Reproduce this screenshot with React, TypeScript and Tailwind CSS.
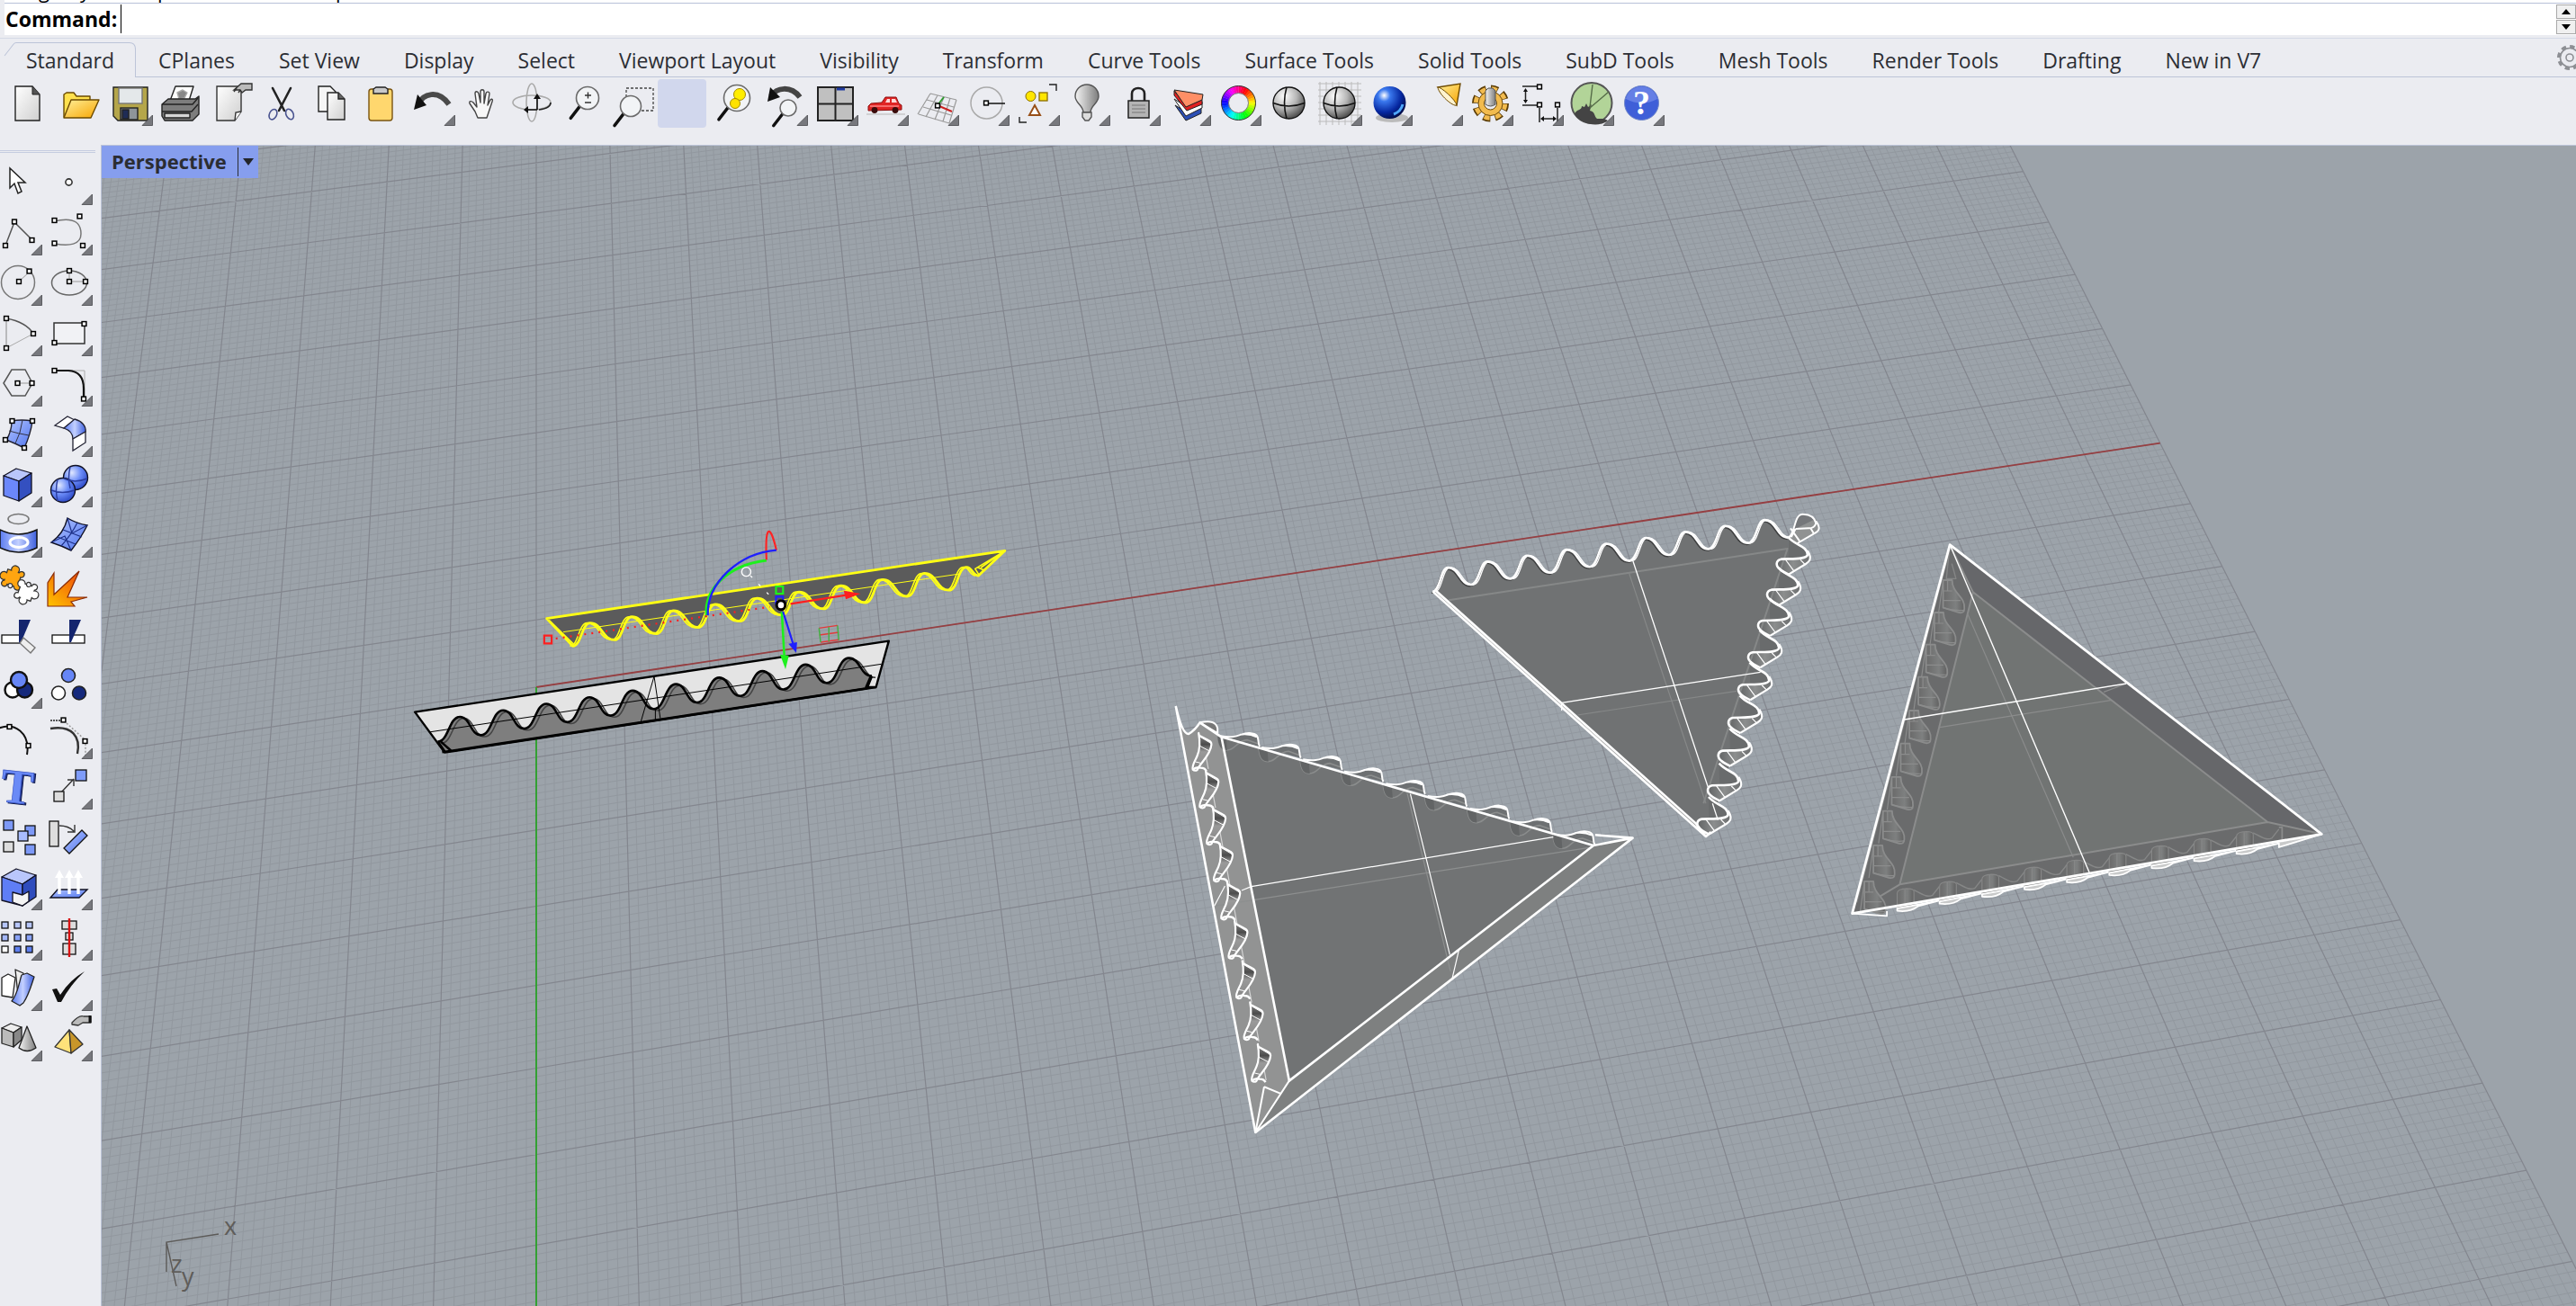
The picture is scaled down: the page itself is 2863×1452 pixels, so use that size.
import React from 'react';

type Point = [number, number];

interface Tool {
  label: string;
  icon?: React.ReactNode;
  menu?: boolean;
}

const TABS = [
  'Standard', 'CPlanes', 'Set View', 'Display', 'Select', 'Viewport Layout', 'Visibility', 'Transform',
  'Curve Tools', 'Surface Tools', 'Solid Tools', 'SubD Tools', 'Mesh Tools', 'Render Tools', 'Drafting', 'New in V7',
];

/* ---------- small drawing helpers ---------- */

const Knob = ({ x, y }: { x: number; y: number }) => (
  <rect x={x - 2.4} y={y - 2.4} width="4.8" height="4.8" fill="#fff" stroke="#000" strokeWidth="1.5" />
);

const Box = ({ x, y, w, h, fill }: { x: number; y: number; w: number; h: number; fill: string }) => (
  <rect x={x} y={y} width={w} height={h} fill={fill} stroke="#111" strokeWidth="1.3" />
);

const PuzzleShape = () => (
  <g>
    <rect x="-7.500" y="-7.500" width="15" height="15" />
    <circle cx="0" cy="-10" r="3.800" />
    <circle cx="-10" cy="0" r="3.800" />
    <circle cx="8" cy="-7" r="2.600" />
    <circle cx="-7" cy="8" r="2.600" />
    <circle cx="8" cy="7" r="3.400" />
  </g>
);

const Puzzle = ({ x, y, turn, fill }: { x: number; y: number; turn: number; fill: string }) => (
  <g transform={`translate(${x} ${y}) rotate(${turn})`}>
    <g fill="#333" stroke="#333" strokeWidth="2.600"><PuzzleShape /></g>
    <g fill={fill}><PuzzleShape /></g>
    <circle cx="0" cy="8.500" r="2.500" fill="#ebecf1" stroke="#333" strokeWidth="1.200" />
  </g>
);

const Defs = () => (
  <svg className="absolute h-0 w-0" aria-hidden="true">
    <defs>
      <linearGradient id="paper" x1="0" y1="0" x2="1" y2="1">
        <stop offset="0" stopColor="#fff" />
        <stop offset="1" stopColor="#cfcfcf" />
      </linearGradient>
      <linearGradient id="blue" x1="0" y1="0" x2="1" y2="1">
        <stop offset="0" stopColor="#b4c6ff" />
        <stop offset="1" stopColor="#4f74ee" />
      </linearGradient>
      <linearGradient id="blueBand" x1="0" y1="0" x2="1" y2="0">
        <stop offset="0" stopColor="#5b7cf0" />
        <stop offset="0.5" stopColor="#c3d0ff" />
        <stop offset="1" stopColor="#3d5fdd" />
      </linearGradient>
      <linearGradient id="gold" x1="0" y1="0" x2="1" y2="1">
        <stop offset="0" stopColor="#fff09a" />
        <stop offset="1" stopColor="#f7a400" />
      </linearGradient>
      <linearGradient id="fire" x1="0" y1="1" x2="1" y2="0">
        <stop offset="0" stopColor="#ffc400" />
        <stop offset="1" stopColor="#ee3d0c" />
      </linearGradient>
      <linearGradient id="steel" x1="0" y1="0" x2="1" y2="0">
        <stop offset="0" stopColor="#f4f4f4" />
        <stop offset="1" stopColor="#7d7d7d" />
      </linearGradient>
      <radialGradient id="ballBlue" cx="0.35" cy="0.3" r="0.75">
        <stop offset="0" stopColor="#dfe7ff" />
        <stop offset="0.5" stopColor="#6a8bf8" />
        <stop offset="1" stopColor="#2b47c4" />
      </radialGradient>
      <radialGradient id="ballDeep" cx="0.33" cy="0.28" r="0.75">
        <stop offset="0" stopColor="#fff" />
        <stop offset="0.25" stopColor="#3a78ee" />
        <stop offset="0.7" stopColor="#0527a0" />
        <stop offset="1" stopColor="#020f4c" />
      </radialGradient>
      <radialGradient id="ballGray" cx="0.35" cy="0.28" r="0.8">
        <stop offset="0" stopColor="#fff" />
        <stop offset="0.5" stopColor="#b6b6b6" />
        <stop offset="1" stopColor="#3c3c3c" />
      </radialGradient>
      <linearGradient id="hook" x1="0" y1="0" x2="0" y2="1">
        <stop offset="0" stopColor="#8c8c8c" />
        <stop offset="0.3" stopColor="#4c4c4c" />
        <stop offset="0.5" stopColor="#9a9a9a" />
        <stop offset="1" stopColor="#858585" />
      </linearGradient>
      <linearGradient id="cyl" x1="0" y1="0" x2="1" y2="0">
        <stop offset="0" stopColor="#6a6a6a" />
        <stop offset="0.6" stopColor="#7e8080" />
        <stop offset="1" stopColor="#606060" />
      </linearGradient>
      <linearGradient id="ribbon" x1="0" y1="0" x2="1" y2="0">
        <stop offset="0" stopColor="#606263" />
        <stop offset="0.5" stopColor="#8c8e8e" />
        <stop offset="1" stopColor="#6c6e6f" />
      </linearGradient>
    </defs>
  </svg>
);

const ColorRing = () => (
  <g fill="none" strokeWidth="8">
    {Array.from({ length: 36 }, (_, k) => {
      const a = ((k * 10 - 90) * Math.PI) / 180;
      const b = ((k * 10 - 79) * Math.PI) / 180;
      return (
        <path
          key={k}
          stroke={`hsl(${(335 + k * 10) % 360} 100% 50%)`}
          d={`M${29.5 + 15 * Math.cos(a)} ${26.5 + 15 * Math.sin(a)}A15 15 0 0 1 ${29.5 + 15 * Math.cos(b)} ${26.5 + 15 * Math.sin(b)}`}
        />
      );
    })}
    <circle cx="29.5" cy="26.5" r="19" stroke="#333" strokeWidth="1" />
    <circle cx="29.5" cy="26.5" r="11" stroke="#777" strokeWidth="1" />
  </g>
);

const GrayBall = () => (
  <g>
    <circle cx="29.5" cy="26.5" r="17.5" fill="url(#ballGray)" stroke="#111" strokeWidth="1.4" />
    <path d="M12 26.5q17 7 35 0M27 9q-5 17 0 35" fill="none" stroke="#111" strokeWidth="1.6" />
  </g>
);

const Lens = ({ x, y, r }: { x: number; y: number; r: number }) => (
  <g>
    <path d={`M${x - r * 0.7} ${y + r * 0.75}L${x - r * 0.7 - 10} ${y + r * 0.75 + 13}`} stroke="#111" strokeWidth="3.4" strokeLinecap="round" />
    <circle cx={x} cy={y} r={r} fill="#f2f4f6" stroke="#6b6b6b" strokeWidth="1.6" />
  </g>
);

/* ---------- top toolbar ---------- */

const TOOLBAR: Tool[] = [
  { label: 'New', icon: <g><path d="M14 8h19l8 9v29H14z" fill="url(#paper)" stroke="#222" strokeWidth="1.4" /><path d="M33 8v9h8" fill="#555" stroke="#222" /></g> },
  { label: 'Open', icon: <g stroke="#6b4a00" strokeWidth="1.4" strokeLinejoin="round"><path d="M12 42V17l3-2h8l3 4h15v20z" fill="#ffe14d" /><path d="M12 43l8-20h31l-9 20z" fill="url(#gold)" /></g> },
  { label: 'Save', menu: true, icon: <g stroke="#222" strokeWidth="1.4"><path d="M11 9h38v37H16l-5-5z" fill="#b5a64a" /><rect x="17" y="10" width="26" height="17" fill="#e4e8ea" stroke="#777" /><rect x="19" y="32" width="19" height="13" fill="#8e9499" /><rect x="21" y="34" width="7" height="10" fill="#1f2c55" /></g> },
  { label: 'Print', icon: <g stroke="#222" strokeWidth="1.4" strokeLinejoin="round"><path d="M18 24l6-16h20l-5 16z" fill="#fff" /><path d="M26 15l6-3 5 3-3 6-6 1z" fill="#888" stroke="#aaa" /><path d="M9 28l7-6h30l4-3v20l-7 7H12l-3-5z" fill="#7d7d7d" /><path d="M9 28h34l6-7M9 36h33l7-8" fill="none" /><path d="M12 38h28v5H12z" fill="#d5d5d5" /></g> },
  { label: 'Properties', icon: <g stroke="#333" strokeWidth="1.4"><path d="M14 8h27v28l-7 10H14z" fill="url(#paper)" /><path d="M34 46l1-9 6-1" fill="#fff" /><path d="M33 12l8-7h12v7h-7l-4 3-2-3z" fill="#bbb" /><path d="M36 10l-3 4M40 12l-2 3" /></g> },
  { label: 'Cut', icon: <g fill="none" strokeLinecap="round"><path d="M20 10l13 25M40 10L27 35" stroke="#222" strokeWidth="2.6" /><ellipse cx="20.500" cy="39" rx="4" ry="6" transform="rotate(25 20 39)" stroke="#4a5490" strokeWidth="1.6" /><ellipse cx="39" cy="39" rx="4" ry="6" transform="rotate(-25 39 39)" stroke="#4a5490" strokeWidth="1.6" /></g> },
  { label: 'Copy', icon: <g stroke="#222" strokeWidth="1.4"><path d="M15 8h13l6 6v22H15z" fill="#f6f6f6" /><path d="M25 15h12l7 7v23H25z" fill="url(#paper)" /><path d="M37 15v7h7" fill="#666" /></g> },
  { label: 'Paste', icon: <g stroke="#7a5410" strokeWidth="1.4"><rect x="15" y="11" width="26" height="35" rx="3" fill="#ffd76e" /><path d="M20 16v-5l3-2h10l3 2v5z" fill="#c9c9c9" stroke="#222" /></g> },
  { label: 'Undo', menu: true, icon: <g><path d="M14 28C19 16 36 11 48 28" fill="none" stroke="#4a4a4a" strokeWidth="6" /><path d="M9 34l4-17 10 12z" fill="#111" /></g> },
  { label: 'Pan', icon: <path d="M24 43l-3-7-6-9c-1-3 2-3 4-1l4 5-2-15c0-3 3-3 4 0l2 10V14c0-3 4-3 4 0v13l2-11c1-3 4-2 4 0l-2 13 3-6c2-2 3 0 2 2l-4 12-2 6z" fill="#f7f7f7" stroke="#444" strokeWidth="1.4" strokeLinejoin="round" /> },
  { label: 'Rotate view', icon: <g fill="none" stroke="#aaa" strokeWidth="1.6"><ellipse cx="28" cy="26" rx="6" ry="21" /><ellipse cx="28" cy="26" rx="21" ry="8" /><path d="M36 34c8-1 13-4 13-8" stroke="#222" /><path d="M34 19v15M22 34h12" stroke="#111" /><path d="M30 22l4-6 4 6zM24 30l-5 4 5 4z" fill="#111" stroke="none" /></g> },
  { label: 'Zoom dynamic', icon: <g><Lens x={34} y={21} r={12.5} /><path d="M31 18h7M34.500 14.500v7M31 26h7" stroke="#333" strokeWidth="1.4" /></g> },
  { label: 'Zoom window', icon: <g><rect x="21" y="10" width="30" height="25" fill="none" stroke="#444" strokeWidth="1.3" strokeDasharray="3 2" /><Lens x={26} y={30} r={11.500} /></g> },
  { label: 'Zoom extents' },
  { label: 'Zoom selected', icon: <g><Lens x={32} y={21} r={14.500} /><circle cx="35" cy="17" r="6.500" fill="#ffee00" stroke="#a58a00" /><circle cx="30" cy="27" r="5.500" fill="#ffe200" stroke="#a58a00" /></g> },
  { label: 'Undo view change', menu: true, icon: <g><path d="M14 19C20 9 36 7 46 20" fill="none" stroke="#444" strokeWidth="6" /><path d="M10 25l3-16 11 11z" fill="#111" /><Lens x={33} y={32} r={9} /></g> },
  { label: 'Four viewports', menu: true, icon: <g stroke="#222" strokeWidth="2"><rect x="10" y="9" width="39" height="37" fill="#c0c0c0" /><path d="M29.500 9v37M10 27.500h39" /><path d="M31 11h9" stroke="#1d38a0" strokeWidth="3" /></g> },
  { label: 'Named views', menu: true, icon: <g><path d="M8 39h43" stroke="#c9c9c9" strokeWidth="1.600" /><path d="M10 35v-5l3-3 12-1 4-6h12l3 7 3 2v5z" fill="#e02424" stroke="#8e1212" strokeWidth="1" /><path d="M12 30h32" stroke="#ff8b8b" strokeWidth="1.400" /><path d="M29 26l2-4h3v4zM36 26v-4h4l2 4z" fill="#ffd9d9" /><circle cx="17" cy="34.500" r="3.400" fill="#3a0a0a" /><circle cx="40" cy="34.500" r="3.400" fill="#3a0a0a" /></g> },
  { label: 'Set CPlane', menu: true, icon: <g fill="none" stroke="#9a9a9a" strokeWidth="1.200"><path d="M23 16l29 7M19 23l30 8M15 31l31 9M10 39l34 10M23 16L9 39M31 18L18 42M38 20L28 45M45 21L37 47M52 23L44 49" /><path d="M31 29l7-9" stroke="#2e9b2e" strokeWidth="2" /><path d="M33 30l14 6" stroke="#c22" strokeWidth="2" /><Knob x={31} y={29.500} /></g> },
  { label: 'Object snap', menu: true, icon: <g fill="none"><circle cx="29.500" cy="26.500" r="17.500" stroke="#aaa" strokeWidth="1.500" /><path d="M30 27h20" stroke="#111" strokeWidth="1.500" /><Knob x={29} y={26.500} /></g> },
  { label: 'Select', menu: true, icon: <g><circle cx="22.500" cy="19" r="5.500" fill="#ffe600" stroke="#8a6d00" /><rect x="32" y="15" width="9" height="9" fill="#ffe600" stroke="#8a6d00" strokeWidth="1.300" /><path d="M27 29l6 11H21z" fill="#fff" stroke="#984f17" strokeWidth="2" /><path d="M43 6h8v7M10 42v6h8" fill="none" stroke="#222" strokeWidth="1.400" /></g> },
  { label: 'Hide objects', menu: true, icon: <g stroke="#555" strokeWidth="1.400"><path d="M25 37c0-8-9-10-9-18a13 13 0 0126 0c0 8-9 10-9 18z" fill="url(#steel)" /><path d="M24 37h10v5l-3 4h-4l-3-4z" fill="#ddd" /></g> },
  { label: 'Lock objects', menu: true, icon: <g stroke="#222"><path d="M23 25v-9c0-8 14-8 14 0v9" fill="none" strokeWidth="2.600" /><rect x="19" y="24" width="23" height="19" fill="#b4b4b4" strokeWidth="1.500" /><path d="M23 29h15M23 33h15M23 37h15" stroke="#777" /></g> },
  { label: 'Layers', menu: true, icon: <g stroke="#222" strokeWidth="1" strokeLinejoin="round"><path d="M15 29l12 17 17-8V31L28 37z" fill="#2c4fb6" /><path d="M14 22l13 19 18-9v-7L28 31z" fill="#fff" /><path d="M14 13l14 17 17-7v5L28 35 14 18z" fill="#e22020" /><path d="M14 12l32 5-1 6-18 8z" fill="#ff8f66" /></g> },
  { label: 'Object properties', menu: true, icon: <ColorRing /> },
  { label: 'Shade', icon: <GrayBall /> },
  { label: 'Render preview', menu: true, icon: <g><path d="M8 3v48M15 3v48M22 3v48M29 3v48M36 3v48M43 3v48M50 3v48M6 5h48M6 12h48M6 19h48M6 26h48M6 33h48M6 40h48M6 47h48" stroke="#bbb" /><GrayBall /></g> },
  { label: 'Render', menu: true, icon: <g><ellipse cx="32" cy="43" rx="18" ry="5" fill="#bbb" /><circle cx="29.500" cy="26" r="18" fill="url(#ballDeep)" /><path d="M34 39q8-3 10-11" fill="none" stroke="#4fa8ff" strokeWidth="3" /></g> },
  { label: 'Spotlight', menu: true, icon: <g><path d="M27 9l25-4-4 24z" fill="url(#gold)" stroke="#6e4a00" strokeWidth="1.400" /><path d="M27 9c3-1 20 14 21 20-4 2-20-12-21-20z" fill="#fff3cf" stroke="#6e4a00" /></g> },
  { label: 'Options', menu: true, icon: <g><circle cx="29.500" cy="27" r="15.500" fill="none" stroke="#5a3c06" strokeWidth="10" strokeDasharray="7.200 4.970" /><circle cx="29.500" cy="27" r="15" fill="none" stroke="#f2bb4e" strokeWidth="7.500" strokeDasharray="5.600 6.180" strokeDashoffset="-0.700" /><circle cx="29.500" cy="27" r="13.500" fill="#f2bb4e" stroke="#6a4708" /><circle cx="29.500" cy="27" r="7" fill="#ebecf1" stroke="#6a4708" /><path d="M24 28V13l3-3h5l3 3v15q-5 4-11 0z" fill="url(#steel)" stroke="#555" /></g> },
  { label: 'Dimensions', menu: true, icon: <g fill="none" stroke="#222" strokeWidth="1.500"><path d="M9 8h18M9 29h18M12.500 12v13M28 32v16M48 32v16M31 44h14" /><path d="M10 14l2.500-4 2.500 4zM10 23l2.500 4 2.500-4zM33 41l-4 3 4 3zM43 41l4 3-4 3z" fill="#111" stroke="none" /><Knob x={28} y={8.500} /><Knob x={28} y={28.500} /><Knob x={48} y={28.500} /></g> },
  { label: 'Grasshopper', menu: true, icon: <g><circle cx="30" cy="26.500" r="22.500" fill="#b2d498" stroke="#555" strokeWidth="2" /><path d="M11 39c2-6 8-4 8-9l3 1 2-4 2 4 4-3-2 7c7 2 4 6 8 9h8l4 2c-9 8-30 5-37-7z" fill="#444" /><path d="M28 32L49 14M28 31L31 6" stroke="#556b48" strokeWidth="1.400" /></g> },
  { label: 'Help', menu: true, icon: <g><circle cx="29.500" cy="26.500" r="19" fill="#3f5fd8" stroke="#6f86c8" /><path d="M12 22a18 18 0 0135 0q-17 9-35 0z" fill="#7e95ee" opacity="0.600" /><text x="29.500" y="39" textAnchor="middle" fontSize="38" fontWeight="bold" fontFamily="'Liberation Serif', serif" fill="#fff">?</text></g> },
];

/* ---------- side toolbar, two tools in each row ---------- */

const SIDEBAR: Tool[] = [
  { label: 'Cancel', icon: <path d="M19 11v22l5-5 4 11 4-2-4-10h8z" fill="#fff" stroke="#222" strokeWidth="1.500" /> },
  { label: 'Point', menu: true, icon: <circle cx="28.500" cy="26.500" r="3.600" fill="#fff" stroke="#333" strokeWidth="1.600" /> },
  { label: 'Polyline', menu: true, icon: <g><path d="M14 41l10-26 20 20" fill="none" stroke="#555" strokeWidth="1.500" /><Knob x={14} y={41} /><Knob x={24} y={14.500} /><Knob x={43.500} y={35} /></g> },
  { label: 'Curve', menu: true, icon: <g><path d="M12 14c25-6 30 4 30 14 0 12-13 14-29 11" fill="none" stroke="#777" strokeWidth="1.500" /><Knob x={12.500} y={13} /><Knob x={40.500} y={8.500} /><Knob x={12.500} y={38.500} /><Knob x={44} y={41} /></g> },
  { label: 'Circle', menu: true, icon: <g><circle cx="28" cy="26" r="18.500" fill="none" stroke="#777" strokeWidth="1.500" /><path d="M29 25l12-11" stroke="#999" /><Knob x={29} y={25} /><Knob x={40.500} y={13.500} /></g> },
  { label: 'Ellipse', menu: true, icon: <g><ellipse cx="29" cy="26.500" rx="19.500" ry="13.500" fill="none" stroke="#666" strokeWidth="1.500" /><path d="M29 13v12h18" fill="none" stroke="#999" /><Knob x={29} y={13} /><Knob x={29} y={25} /><Knob x={47} y={25} /></g> },
  { label: 'Arc', menu: true, icon: <g fill="none"><path d="M15 43V10" stroke="#888" /><path d="M15 10q22 4 30 17" stroke="#555" strokeWidth="1.500" /><path d="M45 27L15 43" stroke="#aaa" /><Knob x={15} y={10} /><Knob x={45} y={27} /><Knob x={15} y={43} /></g> },
  { label: 'Rectangle', menu: true, icon: <g><path d="M12 38V15h34v23z" fill="#f1f2f5" stroke="#333" strokeWidth="1.500" /><Knob x={45.500} y={16} /><Knob x={12.500} y={37} /></g> },
  { label: 'Polygon', menu: true, icon: <g><path d="M12 26l9-15h15l8 15-8 14H21z" fill="none" stroke="#555" strokeWidth="1.500" /><path d="M28 26h16" stroke="#999" /><Knob x={27.500} y={26} /><Knob x={43.500} y={26} /></g> },
  { label: 'Fillet', menu: true, icon: <g fill="none"><path d="M12 12h34v32" stroke="#aaa" /><path d="M12 12h16q17 1 17 20v12" stroke="#111" strokeWidth="2.200" /><Knob x={12.500} y={12} /><Knob x={45} y={43.500} /></g> },
  { label: 'Surface', menu: true, icon: <g><path d="M21 12q11-2 23 0-2 15-9 30-10-5-20-9 6-9 6-21z" fill="url(#blue)" stroke="#223" strokeWidth="1.400" /><path d="M33 11q-2 15-8 26M18 23q10 3 22 5" stroke="#334" fill="none" /><Knob x={21.500} y={12} /><Knob x={44} y={12} /><Knob x={14} y={33} /><Knob x={35} y={42} /></g> },
  { label: 'Blend surface', menu: true, icon: <g stroke="#223" strokeWidth="1.300"><path d="M13 17l14-10 8 4-12 9z" fill="#fff" /><path d="M23 20l12-10c8 2 13 8 12 14l-14 8c0-6-4-10-10-12z" fill="url(#blueBand)" /><path d="M33 32l14-8v12L33 45z" fill="#fff" /></g> },
  { label: 'Box', menu: true, icon: <g stroke="#112" strokeWidth="1.300" strokeLinejoin="round"><path d="M12 17l14-8 17 5-14 9z" fill="#b9c6fb" /><path d="M12 17l17 6v22l-17-6z" fill="#6b87fb" /><path d="M29 23l14-9v22l-14 9z" fill="#3450c0" /></g> },
  { label: 'Boolean union', menu: true, icon: <g stroke="#112" strokeWidth="1.400" fill="none"><circle cx="36" cy="19" r="13.500" fill="url(#ballBlue)" /><circle cx="22" cy="33" r="13.500" fill="url(#ballBlue)" /><path d="M30 7q-3 12 0 24M23 20q12 6 26 0M16 21q-3 12 0 24M9 33q12 5 26 0" stroke="#2a3da0" /></g> },
  { label: 'Project', menu: true, icon: <g><ellipse cx="28.500" cy="9" rx="11.500" ry="5.500" fill="none" stroke="#777" strokeWidth="1.600" /><path d="M8 21q20 10 41 0v20q-20 10-41 0z" fill="url(#blueBand)" stroke="#111" strokeWidth="1.500" /><ellipse cx="29" cy="35" rx="10" ry="5.500" fill="none" stroke="#fff" strokeWidth="3" /></g> },
  { label: 'Mesh', menu: true, icon: <g><path d="M27 8q10 6 22 8-7 14-18 28-10-5-22-9 14-10 18-27z" fill="url(#blue)" stroke="#112" strokeWidth="1.400" /><path d="M38 13q-7 14-18 26M22 21l21 8M16 29l20 8M27 8l5 17 17-9M9 35l15-7 7 16" fill="none" stroke="#1c2f88" strokeWidth="1.200" /></g> },
  { label: 'Join', icon: <g><Puzzle x={22} y={19} turn={18} fill="#ffa511" /><Puzzle x={37} y={34} turn={200} fill="#fff" /></g> },
  { label: 'Explode', icon: <path d="M5 50V24l7-11v24l28-26-13 29 22 0-18 5 4 5z" fill="url(#fire)" stroke="#8a2b06" strokeWidth="1.200" /> },
  { label: 'Trim', icon: <g><Box x={10} y={26} w={20} h={9} fill="#fff" /><path d="M29 9h13L31 35h-2z" fill="#14256e" /><path d="M34 29l13 11-5 6-12-11z" fill="#eee" stroke="#777" strokeWidth="1.400" /></g> },
  { label: 'Split', icon: <g><Box x={10} y={26} w={36} h={9} fill="#fff" /><path d="M29 9h13L31 34h-2z" fill="#14256e" /></g> },
  { label: 'Group', menu: true, icon: <g stroke="#111" strokeWidth="2.400"><circle cx="22" cy="31" r="8.500" fill="#fff" /><circle cx="35.500" cy="31" r="8.500" fill="#15297c" /><circle cx="29" cy="20" r="9" fill="#6686f6" /></g> },
  { label: 'Ungroup', icon: <g stroke="#222" strokeWidth="1.600"><circle cx="28" cy="15" r="7.500" fill="#6686f6" /><circle cx="17" cy="34.500" r="7.500" fill="#fff" /><circle cx="40" cy="34.500" r="7.500" fill="#15297c" /></g> },
  { label: 'Edit points', icon: <g fill="none"><path d="M6 18c18-8 36 5 32 29" stroke="#111" strokeWidth="2" /><Knob x={18.500} y={16} /><Knob x={39.500} y={37} /></g> },
  { label: 'Control points', menu: true, icon: <g fill="none"><path d="M8 18c24-4 34 9 30 28" stroke="#333" strokeWidth="2.400" /><path d="M8 9h12" stroke="#222" strokeDasharray="2 1" strokeWidth="1.500" /><path d="M26 12l21 19v17" stroke="#999" strokeDasharray="2 2" strokeWidth="1.500" /><Knob x={22.500} y={8.500} /><Knob x={46.500} y={32} /></g> },
  { label: 'Text', icon: <g transform="rotate(6 28 27)" textAnchor="middle" fontSize="54" fontWeight="bold" fontFamily="'Liberation Serif', serif"><text x="29" y="46" fill="#24358c" stroke="#111b4a" aria-hidden="true">T</text><text x="27" y="45" fill="#6a8af6" stroke="#3450c0" strokeWidth="0.600">T</text></g> },
  { label: 'Move', menu: true, icon: <g><path d="M20 33l14-15M27 19h7v7" fill="none" stroke="#333" strokeWidth="1.400" /><Box x={12} y={32} w={11} h={11} fill="#ddd" /><Box x={36} y={8} w={12} h={12} fill="#7f9cfa" /></g> },
  { label: 'Array', icon: <g><Box x={12} y={8} w={11} h={11} fill="#7d99f7" /><Box x={36} y={14} w={11} h={11} fill="#7d99f7" /><Box x={28} y={20} w={11} h={11} fill="#a9bcff" /><Box x={12} y={32} w={11} h={11} fill="#ddd" /><Box x={36} y={35} w={11} h={11} fill="#7d99f7" /></g> },
  { label: 'Rotate', icon: <g><Box x={7} y={9} w={10} h={28} fill="#ddd" /><path d="M18 14q10 0 16 6M35 13v8h-8" fill="none" stroke="#333" strokeWidth="1.400" /><path d="M23 39l20-20 6 6-20 20z" fill="url(#blue)" stroke="#111" strokeWidth="1.300" /></g> },
  { label: 'Solid edit', menu: true, icon: <g stroke="#112" strokeWidth="1.300" strokeLinejoin="round"><path d="M10 15L26 6l22 7-15 10z" fill="#b9c6fb" /><path d="M10 15l23 8v24l-23-6z" fill="#5f7ef5" /><path d="M33 23l15-10v24L33 47z" fill="#2f4cbd" /><path d="M22 32l11 3 7-4v11l-7 5-11-4z" fill="#f4f4f4" /></g> },
  { label: 'Extrude', menu: true, icon: <g><path d="M16 29h33l-9 9H8z" fill="url(#blue)" stroke="#112" strokeWidth="1.400" /><path d="M18 34V14M29 34V14M39 34V14" stroke="#fff" strokeWidth="3.400" /><path d="M13 16l5-9 5 9zM24 16l5-9 5 9zM34 16l5-9 5 9z" fill="#fff" /></g> },
  { label: 'Rectangular array', menu: true, icon: <g><Box x={10} y={9} w={7} h={7} fill="#b7c6fb" /><Box x={24} y={9} w={7} h={7} fill="#b7c6fb" /><Box x={37} y={9} w={7} h={7} fill="#b7c6fb" /><Box x={10} y={23} w={7} h={7} fill="#a3b7fa" /><Box x={24} y={23} w={7} h={7} fill="#8aa3f8" /><Box x={37} y={23} w={7} h={7} fill="#8aa3f8" /><Box x={10} y={36} w={7} h={7} fill="#fff" /><Box x={24} y={36} w={7} h={7} fill="#5f80f0" /><Box x={37} y={36} w={7} h={7} fill="#5f80f0" /></g> },
  { label: 'Align', menu: true, icon: <g><Box x={21} y={8} w={16} h={9} fill="#ddd" /><Box x={25} y={21} w={8} h={8} fill="#ddd" /><Box x={22} y={33} w={14} h={12} fill="#ddd" /><path d="M29 5v43" stroke="#d81313" strokeWidth="2.400" /></g> },
  { label: 'Flow', menu: true, icon: <g stroke="#222" strokeWidth="1.300" strokeLinejoin="round"><path d="M25 6l9 4-6 24z" fill="#eee" /><path d="M10 15l7-4 8 4-3 22-12-2z" fill="#fff" /><path d="M32 12l6-2 8 4c-4 12-6 20-12 29l-4 3-9-5c7-8 8-20 11-29z" fill="url(#blueBand)" /></g> },
  { label: 'Check', menu: true, icon: <path d="M10 28l5-1 4 7Q30 17 46 8 30 23 20 42h-4z" fill="#111" /> },
  { label: 'Solids', menu: true, icon: <g stroke="#222" strokeWidth="1.300" strokeLinejoin="round"><path d="M10 15l10-5 12 4-9 6z" fill="#eee" /><path d="M10 15l13 5v16l-13-4z" fill="#bbb" /><path d="M23 20l9-6v14l-9 8z" fill="#888" /><path d="M38 13l10 24q-10 7-19 0z" fill="url(#steel)" /></g> },
  { label: 'Pyramid', menu: true, icon: <g stroke="#333" strokeWidth="1.300" strokeLinejoin="round"><path d="M29 17L13 36l18 7z" fill="#ffe27a" /><path d="M29 17l2 26 13-10z" fill="#c8962a" /><path d="M32 9q8-9 13-7h8v7h-9l-5 3-7-1z" fill="#bbb" /><path d="M52 1v8" stroke="#111" strokeWidth="3" /></g> },
];

const ToolButton: React.FC<{ tool: Tool }> = ({ tool }) => (
  <button
    type="button"
    aria-label={tool.label}
    className={tool.icon ? 'size-[54px] shrink-0' : 'size-[54px] shrink-0 rounded-sm bg-[#d1d7ed]'}
  >
    <svg viewBox="0 0 54 54" className="size-full overflow-visible">
      {tool.icon}
      {tool.menu && <path d="M54.500 40v11.500H43z" fill="#77787d" stroke="#46474b" strokeWidth="0.800" />}
    </svg>
  </button>
);

/* ---------- viewport: construction plane ---------- */

// perspective projection of a construction plane point, in major grid units
const project = (i: number, j: number): Point => {
  const a = 0.003786 * i;
  const b = -0.0198 * j;
  const w = 1 + a + b;
  return [(596 + a * 26235 + b * 596) / w, (764 - a * 3091 - b * 3091) / w];
};

const segment = (p: Point, q: Point) => `M${p[0].toFixed(1)} ${p[1].toFixed(1)}L${q[0].toFixed(1)} ${q[1].toFixed(1)}`;

const gridPath = (major: boolean) => {
  let d = '';
  for (let k = -200; k <= 200; k++) {
    if ((k % 10 === 0) !== major) continue;
    d += segment(project(k / 10, -20), project(k / 10, 20));
    d += segment(project(-20, k / 10), project(20, k / 10));
  }
  return d;
};

const MINOR = gridPath(false);
const MAJOR = gridPath(true);
const X_AXIS = segment(project(0, 0), project(20, 0));
const Y_AXIS = segment(project(0, 0), project(0, 20));

/* ---------- viewport: models ---------- */

// rounded wave through alternating low and high points
const wave = (points: Point[], ease = 0.5) =>
  points
    .slice(1)
    .map(([x, y], k) => {
      const [px, py] = points[k];
      const dx = (x - px) * ease;
      return `C${px + dx} ${py} ${x - dx} ${y} ${x} ${y}`;
    })
    .join('');

const alternate = (low: Point, high: Point, step: Point, count: number): Point[] => {
  const out: Point[] = [];
  for (let k = 0; k < count; k++) {
    out.push([low[0] + step[0] * k, low[1] + step[1] * k], [high[0] + step[0] * k, high[1] + step[1] * k]);
  }
  return out;
};

const darkWave = wave([...alternate([101, 794], [155, 711], [104.6, -21.8], 10), [1152, 575]]);
const yellowWave = wave([...alternate([428, 475], [470, 398], [101.2, -20.7], 10), [1410, 240]]);
const whiteWave = wave([[97, 323], [148, 243], ...alternate([225, 300], [280, 223], [132, -19.8], 8), [1283, 143]]);

const HOOKS: Point[] = [[148, 165], [170, 290], [192, 412], [214, 535], [237, 662], [260, 792], [284, 925], [308, 1063], [332, 1203]];
const BUMPS: Point[] = [[230, 180], [358, 218], [487, 258], [615, 298], [745, 339], [875, 380], [1007, 422], [1140, 465], [1273, 508]];
const RUNGS: Point[] = [[1357, 213], [1325, 315], [1295, 418], [1262, 524], [1229, 632], [1196, 742], [1162, 852], [1127, 968], [1092, 1080]];
const FOLDS: Point[] = [[335, 195], [308, 303], [282, 410], [258, 518], [230, 630], [203, 740], [175, 852], [148, 965], [118, 1080], [90, 1200]];

const Strips = () => (
  <g transform="translate(440 560) scale(0.4592 0.3333)" fill="none" strokeLinejoin="round">
    <path d="M46 695L1193 458L1162 612L118 830z" fill="#e4e4e4" />
    <path d={`M101 794${darkWave}L1135 617L118 830z`} fill="#7e7e7e" />
    <path d={`M101 794${darkWave}`} stroke="#444" strokeWidth="1.6" transform="translate(9 5)" />
    <g stroke="#000">
      <path d="M80 762L1175 535M625 576L593 727M625 576L640 716M628 683v38" strokeWidth="1" />
      <path d={`M101 794${darkWave}`} strokeWidth="2.6" />
      <path d="M46 695L1193 458L1162 612L118 830z" strokeWidth="2.4" />
      <path d="M112 829L1140 616L1152 575M1162 612h-24l12-38M102 794l18 36M109 794l26 32" strokeWidth="2.6" />
    </g>
    <path d={`M365 383L428 475${yellowWave}L1474 157z`} fill="#5b5b5b" />
    <g stroke="#ffff14">
      <path d="M405 428L1365 234" strokeWidth="1" />
      <path d={`M428 475${yellowWave}`} strokeWidth="1.6" transform="translate(-7 0)" />
      <path d={`M365 383L428 475${yellowWave}L1474 157z`} strokeWidth="2.8" />
      <path d="M372 390l58 78M1474 157l-72 60 10 22M1408 212l16 10M1474 157l-58 56" strokeWidth="1.6" />
    </g>
  </g>
);

const Gumball = () => (
  <g transform="translate(440 560) scale(0.4592 0.3333)" fill="none" strokeWidth="2.2">
    <path d="M752 373C745 290 800 205 897 189" stroke="#1df01d" strokeWidth="3" />
    <path d="M897 187C893 75 905 60 921 155" stroke="#ff2424" />
    <path d="M755 373C752 265 830 165 921 155" stroke="#1f1fff" strokeWidth="2.4" />
    <ellipse cx="848" cy="227" rx="11" ry="15" stroke="#fff" strokeWidth="1.4" />
    <path d="M858 240L925 335" stroke="#fff" strokeWidth="1.2" strokeDasharray="3 10" />
    <path d="M387 450L905 344" stroke="#ff1f1f" strokeDasharray="2 6" />
    <path d="M359 440h18v26h-18z" stroke="#ff1f1f" />
    <path d="M920 276h17v24h-17z" stroke="#1df01d" />
    <path d="M920 310h17v24h-17z" stroke="#1f1fff" />
    <path d="M955 334L1090 305" stroke="#ff1f1f" />
    <path d="M1125 300L1084 290L1089 319z" fill="#ff1f1f" />
    <path d="M934 360L940 506" stroke="#1df01d" strokeWidth="2.6" />
    <path d="M943 552L930 503L951 507z" fill="#1df01d" />
    <path d="M937 360L962 470" stroke="#1f1fff" />
    <path d="M969 497L950 467L971 462z" fill="#1f1fff" />
    <ellipse cx="932" cy="338" rx="10.500" ry="15" fill="#fff" stroke="#000" strokeWidth="3" />
    <path d="M1024 415l45-9M1025 438l47-9M1028 462l44-8" stroke="#e33a3a" strokeWidth="1.400" />
    <path d="M1024 415l4 47M1048 412v48M1069 406l3 49" stroke="#3fb43f" strokeWidth="1.400" />
  </g>
);

const LeftPanelModel = () => (
  <g transform="translate(1280 760) scale(0.3571 0.3333)" fill="none" strokeLinejoin="round">
    <path d="M217 178L1375 540L428 1325z" fill="#717374" />
    <path d="M77 78Q92 150 108 168Q130 165 150 130L217 178L428 1325L323 1497z" fill="#929393" />
    <path d="M323 1497L428 1325L1375 540L1497 515z" fill="#7e8080" />
    {BUMPS.map(([x, y]) => (
      <g key={x} transform={`translate(${x} ${y})`}>
        <path d="M0 0C35 -2 50 -17 75 -15C112 -12 98 20 112 32z" fill="#6d7072" />
        <path d="M-25 -4C-22 28 -15 42 5 42C30 42 35 10 68 8L104 22" stroke="#8b8d8d" strokeWidth="1.600" />
        <path d="M-25 -4C-22 28 -15 42 5 42L2 2z" fill="#626465" />
        <path d="M-16 -5C40 6 45 -17 75 -15C112 -12 96 10 106 30M45 -10q30-4 52 8" stroke="#fff" strokeWidth="2" />
      </g>
    ))}
    <path d="M150 130Q200 118 205 150V165L150 130z" fill="#777" stroke="#fff" strokeWidth="2" />
    <g stroke="#8d8f8f" strokeWidth="1.200">
      <path d="M195 742L1375 545M795 365L930 960" />
      <path d="M165 220L360 1345" stroke="#d5d5d5" strokeDasharray="22 22" />
    </g>
    <g stroke="#fff" strokeWidth="1.200">
      <path d="M280 690L310 677L1250 512M805 368L928 905M957 885L935 985M195 742L228 675" />
    </g>
    <g stroke="#fff" strokeWidth="2.600">
      <path d="M75 75L323 1497L1497 515L1380 505M217 178L1375 540L428 1325zM75 75Q95 170 115 168Q135 155 150 130L217 178M1375 540L1497 515" />
      <path d="M323 1497L350 1345M323 1497L428 1325M350 1345L400 1367" strokeWidth="2" />
    </g>
    {HOOKS.map(([x, y]) => (
      <g key={y} transform={`translate(${x} ${y})`}>
        <path d="M-2 0C4 35 2 55 -6 75C-12 92 -24 108 -20 122Q-14 128 -6 123C2 100 36 74 38 38Q38 28 28 24L0 8z" fill="url(#hook)" stroke="#fff" strokeWidth="2.200" />
        <path d="M0 42l32 18M-12 96l16 4M2 12l34 22" stroke="#fff" strokeWidth="1" />
        <path d="M-20 122Q-10 112 4 116Q18 116 22 127" stroke="#fff" strokeWidth="2.400" />
      </g>
    ))}
  </g>
);

const MiddlePanelModel = () => (
  <g transform="translate(1560 550) scale(0.3333)" fill="none" strokeLinejoin="round">
    <path d={`M97 323${whiteWave}L1285 250L1020 1120L1008 1140z`} fill="#707273" />
    <path d="M97 323L1008 1140L975 1097L105 318z" fill="#9a9a9a" />
    <path d={`M97 323${whiteWave}`} stroke="#3f4041" strokeWidth="1.600" transform="translate(-4 5)" />
    <path d="M1283 143C1308 110 1300 62 1333 65Q1368 68 1375 95L1385 118Q1380 126 1368 130L1310 165z" fill="#75777a" />
    <path d="M1307 113L1375 80L1385 118L1313 165L1290 142z" fill="#909292" />
    {RUNGS.map(([x, y]) => (
      <g key={y} transform={`translate(${x} ${y})`}>
        <path d="M-75 -72C-50 -42 -12 -44 -10 -12C-16 4 -60 0 -98 2L-108 30L-72 52z" fill="#696b6c" />
        <path d="M-4 -18C4 6 -6 12 -16 18L-72 52L-108 30C-120 12 -112 4 -98 2C-60 0 -14 4 -10 -14z" fill="url(#ribbon)" />
      </g>
    ))}
    <g stroke="#868888">
      <path d="M150 352L1280 180L1000 1030" strokeWidth="2" />
      <path d="M752 262L1008 1030M580 735L1110 655" strokeWidth="1.200" />
    </g>
    {RUNGS.map(([x, y]) => (
      <g key={y} transform={`translate(${x} ${y})`} stroke="#fff">
        <path d="M-75 -72C-50 -42 -12 -44 -10 -12C-16 4 -60 0 -98 2C-116 6 -118 24 -102 36C-92 46 -80 48 -72 54" strokeWidth="2.600" />
        <path d="M-10 -26C8 2 -6 12 -16 18L-72 52" strokeWidth="2.200" />
        <path d="M-84 3l28 38M-34 4l14 14" strokeWidth="1.200" />
      </g>
    ))}
    <path d="M1283 143C1308 130 1300 62 1333 65Q1368 66 1375 95Q1370 112 1350 112L1307 114M1375 88C1392 112 1386 122 1368 130L1313 162M1290 112l30 42M1358 113l10 17M1307 114l-15 28" stroke="#fff" strokeWidth="2" />
    <g stroke="#fff">
      <path d="M765 222L1015 975M1030 1030L1048 1085M527 694L1190 592M527 694v26" strokeWidth="1.300" />
      <path d={`M97 323${whiteWave}`} strokeWidth="2.600" />
      <path d={`M97 323${whiteWave}`} strokeWidth="1.300" transform="translate(7 0)" />
      <path d="M97 323L1008 1140L1025 1125M105 318L975 1097L1008 1140" strokeWidth="2.600" />
    </g>
  </g>
);

const RightPanelModel = () => (
  <g transform="translate(2040 580) scale(0.3571 0.3333)" fill="none" strokeLinejoin="round">
    <path d="M356 77L1513 1042L52 1307z" fill="#6a6b6c" />
    <path d="M356 77L1513 1042L1345 1002L428 235z" fill="#66676a" />
    <path d="M428 235L1345 1002L200 1210z" fill="#717473" />
    <g stroke="#8b8c8c">
      <path d="M356 77L428 235L1345 1002L1513 1042M1345 1002L200 1210L428 235M200 1210L130 1255M358 80L65 1270" strokeWidth="2" />
      <path d="M412 310L740 1120M325 686L860 595M835 568L905 540" strokeWidth="1.200" />
    </g>
    {FOLDS.map(([x, y]) => (
      <g key={y} transform={`translate(${x} ${y})`} stroke="#8b8c8c">
        <path d="M0 0L28 0C28 45 70 55 66 95Q66 112 48 108L0 92z" fill="url(#cyl)" strokeWidth="1.800" />
        <path d="M0 36h28M0 68h54M0 92q35 12 66 8M14 0v36M0 0L-14 108" strokeWidth="1.200" />
      </g>
    ))}
    <path d="M356 77L345 190H375L362 140" stroke="#858686" strokeWidth="1.400" />
    {Array.from({ length: 9 }, (_, k) => (
      <g key={k} transform={`translate(${192 + 132 * k} ${1240 - 23.800 * k})`}>
        <path d="M0 0Q0 -15 30 -16Q52 -16 52 -6V45L0 55z" fill="url(#cyl)" stroke="#868787" strokeWidth="1.200" />
        <path d="M52 -12C80 4 92 14 110 6L132 -24M24 -14v60" stroke="#868787" strokeWidth="1.400" />
        <path d="M0 50V58Q40 64 66 42L130 24L52 40z" fill="#c9caca" stroke="#fff" strokeWidth="1.800" />
      </g>
    ))}
    <path d="M1380 1020h10v40" stroke="#8b8c8c" strokeWidth="1.800" />
    <path d="M1380 1070V1086L1513 1042" fill="#c9caca" stroke="#fff" strokeWidth="1.800" />
    <g stroke="#fff">
      <path d="M215 660L905 540M358 82L790 1170" strokeWidth="1.400" />
      <path d="M356 77L1513 1042L52 1307z" strokeWidth="2.800" />
      <path d="M52 1307l108 8v-16" strokeWidth="1.800" />
    </g>
  </g>
);

const Viewport = () => (
  <main className="relative min-h-0 flex-1 overflow-hidden border-l border-t border-[#bcc4d8] bg-[#9ca3aa]">
    <svg
      viewBox="113 162 2750 1290"
      preserveAspectRatio="xMinYMin slice"
      className="absolute inset-0 size-full [&_path]:[vector-effect:non-scaling-stroke] [&_ellipse]:[vector-effect:non-scaling-stroke]"
      role="img"
      aria-label="Perspective view"
    >
      <path d={MINOR} stroke="#92989f" strokeWidth="1" fill="none" />
      <path d={MAJOR} stroke="#83868e" strokeWidth="1.200" fill="none" />
      <path d={X_AXIS} stroke="#963f42" strokeWidth="1.800" />
      <path d={Y_AXIS} stroke="#33a033" strokeWidth="2" />
      <Strips />
      <Gumball />
      <LeftPanelModel />
      <MiddlePanelModel />
      <RightPanelModel />
      <path d="M185 1414v-33l58-9M185 1381l11 49" fill="none" stroke="#5c5a58" strokeWidth="1.400" />
      <g fill="#5f5d5a" fontFamily="'Open Sans', sans-serif" fontSize="27">
        <text x="249" y="1373">x</text>
        <text x="190" y="1415">z</text>
        <text x="202" y="1429">y</text>
      </g>
    </svg>
    <button type="button" className="relative flex h-9 items-center bg-[#869eee] text-[22px] font-bold text-[#2b2d33]">
      <span className="pr-3 pb-[2px] pl-[11px]">Perspective</span>
      <span className="flex h-8 items-center border-l border-[#2b2d33] px-[5px]">
        <svg viewBox="0 0 12 8" className="h-2 w-3"><path d="M0 0h12L6 8z" fill="#23252a" /></svg>
      </span>
    </button>
  </main>
);

/* ---------- page ---------- */

const CommandBar = () => (
  <header className="bg-[#ebecf1] pl-[5px]">
    <div className="flex h-[3px] items-end overflow-hidden bg-white pl-[38px] text-[22px] leading-[28px]" aria-hidden="true">
      <span className="w-[46px]">g</span>
      <span className="w-[86px]">y</span>
      <span className="w-[198px]">p</span>
      <span>p</span>
    </div>
    <div className="flex h-9 border-t border-[#b9c1d8] bg-white">
      <label htmlFor="command" className="pl-px text-[23px] leading-[34px] font-bold text-black">Command:</label>
      <span className="mt-px ml-1 h-8 w-px bg-black" />
      <input id="command" className="min-w-0 flex-1 bg-white text-[22px] outline-none" />
      <div className="flex w-[22px] flex-col gap-px py-px">
        <button type="button" aria-label="Scroll up" className="flex flex-1 items-center justify-center border border-[#a9a9a9] bg-[#f0f0f0]">
          <svg viewBox="0 0 10 6" className="h-[6px] w-[10px]"><path d="M0 6h10L5 0z" /></svg>
        </button>
        <button type="button" aria-label="Scroll down" className="flex flex-1 items-center justify-center border border-[#a9a9a9] bg-[#f0f0f0]">
          <svg viewBox="0 0 10 6" className="h-[6px] w-[10px]"><path d="M0 0h10L5 6z" /></svg>
        </button>
      </div>
    </div>
  </header>
);

const TabBar = () => (
  <nav className="mt-[3px] flex h-11 items-end border-t border-[#d5d9e6] text-[23px] text-[#2c2e34]">
    {TABS.map((tab, k) => (
      <button
        key={tab}
        type="button"
        className={
          k === 0
            ? 'relative h-[39px] shrink-0 pt-[2px] pr-6 pl-[29px]'
            : 'h-[39px] shrink-0 border-b border-[#bcc4d8] pt-[2px] pr-6 pl-[25px]'
        }
      >
        {k === 0 && (
          <svg viewBox="0 0 150 39" preserveAspectRatio="none" className="absolute inset-0 size-full">
            <path d="M5 15L15 2Q16 .5 18 .5H143Q149.500 .5 149.500 8V39" fill="none" stroke="#bcc4d8" />
          </svg>
        )}
        {tab}
      </button>
    ))}
    <div className="flex h-[39px] flex-1 justify-end overflow-hidden border-b border-[#bcc4d8]">
      <button type="button" aria-label="Toolbar options" className="w-[22px] overflow-hidden">
        <svg viewBox="0 0 30 30" className="mb-1 size-[30px] max-w-none" fill="none">
          <circle cx="15" cy="15" r="11.500" stroke="#8d8f94" strokeWidth="5" strokeDasharray="5 4" />
          <circle cx="15" cy="15" r="10.500" fill="#ebecf1" stroke="#8d8f94" strokeWidth="1.600" />
          <circle cx="15" cy="15" r="4" stroke="#8d8f94" strokeWidth="1.600" />
        </svg>
      </button>
    </div>
  </nav>
);

export default function App() {
  return (
    <div className="flex h-screen flex-col overflow-hidden bg-[#ebecf1] font-['Open_Sans','Noto_Sans',sans-serif]">
      <Defs />
      <CommandBar />
      <TabBar />
      <div className="flex h-[75px] shrink-0 gap-[2px] overflow-hidden pt-[2px] pl-[3px]">
        {TOOLBAR.map((tool) => (
          <ToolButton key={tool.label} tool={tool} />
        ))}
      </div>
      <div className="flex min-h-0 flex-1">
        <aside className="w-28 shrink-0 overflow-hidden pt-[6px]">
          <div className="mr-[6px] h-[3px] border-y border-[#c5cce0]" />
          <div className="mt-[6px] -ml-2 grid w-[110px] grid-cols-2 gap-[2px]">
            {SIDEBAR.map((tool) => (
              <ToolButton key={tool.label} tool={tool} />
            ))}
          </div>
        </aside>
        <Viewport />
      </div>
    </div>
  );
}
